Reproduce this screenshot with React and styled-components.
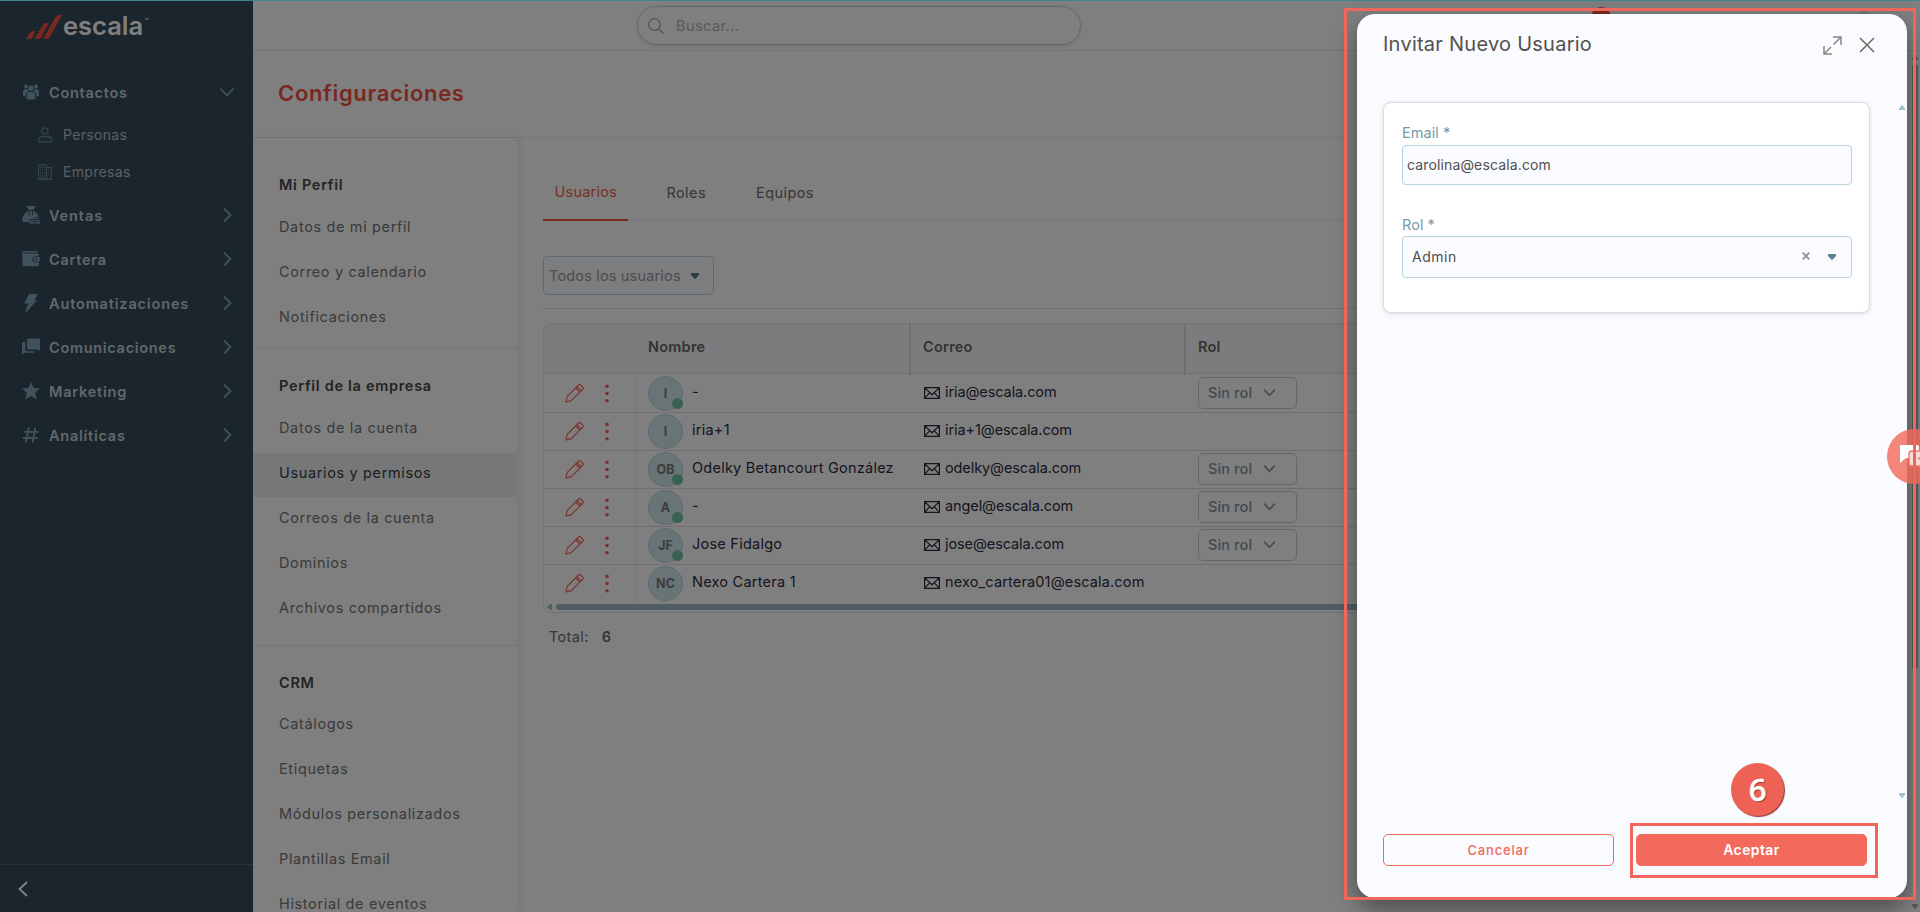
import React from "react";
import styled, { createGlobalStyle } from "styled-components";

const GlobalStyle = createGlobalStyle`
  * {
    box-sizing: border-box;
  }
  body {
    margin: 0;
    overflow: hidden;
    font-family: Inter, "Liberation Sans", sans-serif;
    font-size: 14.5px;
    color: #7a7a7a;
    background: #fff;
  }
  svg {
    display: block;
    flex-shrink: 0;
  }
`;

const Page = styled.div`
  display: flex;
  width: 1920px;
  height: 912px;
  overflow: hidden;
`;

/* sidebar */

const Sidebar = styled.aside`
  display: flex;
  flex-direction: column;
  width: 253px;
  flex-shrink: 0;
  background: #364a5a;
`;

const Brand = styled.div`
  display: flex;
  align-items: center;
  height: 50px;
  padding: 3px 0 0 26px;
  gap: 1px;
  color: #fff;
  .name {
    font-size: 25.5px;
    font-weight: 600;
    letter-spacing: 0;
    line-height: 26px;
    margin-top: -2px;
  }
  .tm {
    font-size: 7px;
    margin-top: -11px;
  }
`;

const Nav = styled.nav`
  flex: 1;
  padding-top: 20px;
`;

const NavItem = styled.div`
  display: flex;
  align-items: center;
  height: 44px;
  padding: 0 18px 0 22px;
  color: #82a6b5;
  .label {
    flex: 1;
    margin-left: 9px;
    color: #c4cfd4;
    font-size: 14.5px;
    font-weight: 600;
    letter-spacing: ${(p) => p.$spacing || 0.74}px;
  }
`;

const SubList = styled.div`
  padding: 2px 0 3px;
`;

const SubItem = styled.div`
  display: flex;
  align-items: center;
  height: 37px;
  padding-left: 37px;
  gap: 10px;
  color: #6d8d9b;
  .label {
    color: #b4c1c8;
    font-size: 14px;
    letter-spacing: 0.32px;
  }
`;

const SidebarFooter = styled.div`
  display: flex;
  align-items: center;
  height: 48px;
  padding: 0 0 0 17px;
  border-top: 1px solid #4f626f;
  color: #fff;
`;

/* main area */

const Main = styled.main`
  display: flex;
  flex-direction: column;
  flex: 1;
  min-width: 0;
`;

const TopBar = styled.header`
  height: 51px;
  flex-shrink: 0;
  padding: 6px 0 0 384px;
  border-bottom: 1px solid #e0ebec;
`;

const Search = styled.div`
  display: flex;
  align-items: center;
  width: 444px;
  height: 39px;
  padding-left: 10px;
  gap: 12px;
  border: 1px solid #c3d3dd;
  border-radius: 20px;
  box-shadow: 0 1px 4px rgba(0, 0, 0, 0.12);
  color: #a3a3a3;
  span {
    margin-top: -1px;
    font-size: 14.5px;
    letter-spacing: 0.45px;
    color: #b4b4b4;
  }
`;

const PageHeader = styled.div`
  display: flex;
  align-items: center;
  height: 87px;
  flex-shrink: 0;
  padding: 0 0 2px 25px;
  border-bottom: 1px solid #ebebeb;
  h1 {
    margin: 0;
    font-size: 22px;
    font-weight: 600;
    letter-spacing: 0.68px;
    color: #f4513f;
  }
`;

const Body = styled.div`
  display: flex;
  flex: 1;
  min-height: 0;
`;

const Settings = styled.div`
  width: 265px;
  flex-shrink: 0;
  padding-top: 10px;
  overflow: hidden;
  border-right: 1px solid #f4f4f4;
  box-shadow: 3px 0 8px rgba(0, 0, 0, 0.07);
`;

const Section = styled.section`
  padding-bottom: ${(p) => p.$bottom}px;
  border-bottom: 1px solid #eaeaea;
`;

const SectionTitle = styled.div`
  height: ${(p) => p.$height || 58}px;
  padding: 27px 0 0 26px;
  font-weight: 600;
  line-height: 20px;
  letter-spacing: 0.7px;
  color: #474747;
`;

const SectionItem = styled.div`
  height: 44px;
  margin-top: 1px;
  padding: 0 0 0 26px;
  line-height: 40px;
  white-space: nowrap;
  letter-spacing: 0.64px;
  color: ${(p) => (p.$active ? "#3a3a3a" : "#747474")};
  background: ${(p) => (p.$active ? "#ebeff3" : "transparent")};
`;

const Content = styled.div`
  flex: 1;
  min-width: 0;
  padding: 29px 20px 0 25px;
`;

const Tabs = styled.div`
  display: flex;
  gap: 26px;
  height: 53px;
  border-bottom: 1px solid #ececec;
`;

const Tab = styled.div`
  height: 54px;
  padding: ${(p) => (p.$active ? "16px 11.5px 0" : "17px 12px 0")};
  line-height: 18px;
  letter-spacing: ${(p) => (p.$active ? "0.22px" : "0.42px")};
  color: ${(p) => (p.$active ? "#f4604f" : "#6d6d6d")};
  border-bottom: 2px solid ${(p) => (p.$active ? "#f4513f" : "transparent")};
`;

const Filter = styled.div`
  display: flex;
  align-items: center;
  width: 171px;
  height: 39px;
  margin-top: 36px;
  padding: 0 14px 1px 5px;
  justify-content: space-between;
  border: 1px solid #bfd3e0;
  border-radius: 4px;
  background: #f8fafd;
  font-size: 14.5px;
  letter-spacing: 0.17px;
  color: #9c9c9c;
  svg {
    margin-top: 2px;
  }
`;

const Rule = styled.div`
  height: 1px;
  margin: 13px 0 14px;
  background: #dde6e9;
`;

const Table = styled.div`
  width: 1340px;
  height: 290px;
  border: 1px solid #dde6e9;
  border-radius: 8px;
  overflow: hidden;
`;

const Row = styled.div`
  display: grid;
  grid-template-columns: 92px 275px 275px 1fr;
  height: 38px;
  border-bottom: 1px solid ${(p) => (p.$last ? "transparent" : "#dfdfdf")};
  color: #2c2c40;
`;

const HeadRow = styled(Row)`
  height: 50px;
  margin-bottom: 1px;
  background: #f8f9fc;
  border-color: #dde6e9;
`;

const HeadCell = styled.div`
  padding: 14px 0 0 12px;
  height: 51px;
  font-size: 14.5px;
  font-weight: 600;
  letter-spacing: 0.24px;
  line-height: 18px;
  color: #666;
  border-right: ${(p) => (p.$resize ? "2px solid #dcdcdc" : "1px solid #f1f1f1")};
`;

const Actions = styled.div`
  display: flex;
  align-items: center;
  gap: 21px;
  padding-left: 21px;
  color: #f4604f;
  border-right: 1px solid #f3f3f3;
`;

const NameCell = styled.div`
  display: flex;
  padding: 1px 0 0 12px;
  gap: 9px;
  font-size: 14.5px;
  letter-spacing: 0.24px;
  line-height: 31px;
  white-space: nowrap;
`;

const Avatar = styled.div`
  position: relative;
  width: 35px;
  height: 35px;
  border: 1px solid #bcd4da;
  border-radius: 50%;
  background: #d2e9ec;
  color: #7a7a7a;
  font-size: 12.5px;
  font-weight: 700;
  line-height: 34px;
  letter-spacing: 0;
  text-align: center;
`;

const Online = styled.i`
  position: absolute;
  right: -1px;
  bottom: 1px;
  width: 11px;
  height: 11px;
  border-radius: 50%;
  background: #6cc2a8;
`;

const MailCell = styled.div`
  display: flex;
  padding-left: 13px;
  gap: 5px;
  font-size: 14.5px;
  letter-spacing: ${(p) => p.$spacing}px;
  line-height: 33px;
  svg {
    margin-top: 12px;
  }
`;

const RoleCell = styled.div`
  padding: 2px 0 0 12px;
`;

const RoleSelect = styled.div`
  display: flex;
  align-items: center;
  width: 99px;
  height: 32px;
  padding: 0 20px 1px 9px;
  justify-content: space-between;
  border: 1px solid #bfd3e0;
  border-radius: 5px;
  font-size: 14.5px;
  font-weight: 500;
  letter-spacing: 0.12px;
  color: #8297a0;
`;

const HScroll = styled.div`
  display: flex;
  align-items: center;
  gap: 4px;
  height: 6px;
  padding-left: 3px;
  margin-top: 1px;
  div {
    flex: 1;
    height: 6px;
    border-radius: 3px 0 0 3px;
    background: #a2bac9;
  }
`;

const Total = styled.div`
  display: flex;
  gap: 13px;
  padding: 15px 0 0 6px;
  line-height: 18px;
  letter-spacing: 0.35px;
  color: #6d6d6d;
  b {
    font-weight: 600;
  }
`;

/* layers over the page */

const NotificationBadge = styled.div`
  position: absolute;
  left: 1591px;
  top: 7px;
  width: 20px;
  height: 20px;
  border-radius: 50%;
  background: #f4513f;
`;

const UserBadge = styled.div`
  position: absolute;
  left: 1852px;
  top: 11px;
  width: 24px;
  height: 24px;
  border-radius: 50%;
  background: #e9eded;
`;

const PageScroll = styled.div`
  position: absolute;
  top: 55px;
  right: 2px;
  display: flex;
  flex-direction: column;
  justify-content: space-between;
  height: 854px;
  color: #a2bac9;
  div {
    width: 6px;
    height: 605px;
    margin-bottom: auto;
    margin-top: 4px;
    border-radius: 3px;
    background: #a2bac9;
  }
`;

const Backdrop = styled.div`
  position: absolute;
  inset: 0;
  background: rgba(0, 0, 0, 0.5);
`;

const LoadingLine = styled.div`
  position: absolute;
  top: 0;
  left: 0;
  width: 1920px;
  height: 1px;
  background: #3d858b;
`;

const Modal = styled.div`
  position: absolute;
  left: 1357px;
  top: 14px;
  display: flex;
  flex-direction: column;
  width: 550px;
  height: 884px;
  border-radius: 18px;
  background: #fafbfe;
  box-shadow: 0 10px 24px rgba(0, 0, 0, 0.42);
`;

const ModalHeader = styled.div`
  display: flex;
  align-items: center;
  height: 60px;
  padding: 2px 32px 0 26px;
  color: #6a6a6a;
  h2 {
    flex: 1;
    margin: -2px 0 0;
    font-size: 20px;
    font-weight: 400;
    letter-spacing: 0.25px;
    color: #55504f;
  }
  svg + svg {
    margin-left: 17px;
  }
`;

const ModalBody = styled.div`
  display: flex;
  justify-content: space-between;
  flex: 1;
  padding: 28px 2px 36px 26px;
`;

const Card = styled.div`
  width: 487px;
  height: 211px;
  padding: 20px 17px 20px 18px;
  border: 1px solid #dcdcdc;
  border-radius: 8px;
  background: #fff;
  box-shadow: 0 1px 4px rgba(0, 0, 0, 0.12);
`;

const Label = styled.label`
  display: block;
  height: 22px;
  line-height: ${(p) => p.$line || 20}px;
  font-size: 14.5px;
  letter-spacing: 0.05px;
  color: #7799aa;
`;

const Field = styled.div`
  display: flex;
  align-items: center;
  height: ${(p) => p.$height}px;
  padding: 0 15px 2px ${(p) => p.$left}px;
  margin-bottom: 29px;
  border: 1px solid #b9d3de;
  border-radius: 4px;
  background: #fafbfe;
  color: #4f4f4f;
  font-size: 14px;
  letter-spacing: ${(p) => p.$spacing}px;
  span {
    flex: 1;
  }
  svg + svg {
    margin: 2px 0 0 18px;
  }
`;

const BodyScroll = styled.div`
  display: flex;
  flex-direction: column;
  justify-content: space-between;
  padding: 3px 0 0;
  color: #a3c0cf;
`;

const ModalFooter = styled.div`
  display: flex;
  gap: 22px;
  height: 64px;
  padding: 0 0 0 26px;
`;

const Button = styled.button`
  width: 231px;
  height: 32px;
  padding: 0 0 1px;
  border: 1px solid #f26a5c;
  border-radius: 5px;
  font-family: inherit;
  font-size: ${(p) => (p.$primary ? "14px" : "13px")};
  font-weight: ${(p) => (p.$primary ? 600 : 500)};
  letter-spacing: ${(p) => (p.$primary ? "0.4px" : "0.8px")};
  color: ${(p) => (p.$primary ? "#fff" : "#f26a5c")};
  background: ${(p) => (p.$primary ? "#f26a5c" : "transparent")};
`;

const ChatBubble = styled.div`
  position: absolute;
  left: 1887px;
  top: 429px;
  width: 55px;
  height: 55px;
  padding: 15px 0 0 12px;
  border-radius: 50%;
  background: rgba(242, 106, 92, 0.82);
`;

const Highlight = styled.div`
  position: absolute;
  left: ${(p) => p.$x}px;
  top: ${(p) => p.$y}px;
  width: ${(p) => p.$w}px;
  height: ${(p) => p.$h}px;
  border: 3px solid #f0665a;
`;

const Step = styled.div`
  position: absolute;
  left: 1731px;
  top: 763px;
  width: 53px;
  height: 53px;
  border-radius: 50%;
  background: #ee6256;
  box-shadow: 1px 1px 1px #8d3a33;
  color: #fff;
  font-family: "Noto Sans", sans-serif;
  font-size: 31px;
  font-weight: 500;
  line-height: 52px;
  text-align: center;
  text-shadow: 1px 1px 1px #7a3029;
  -webkit-text-stroke: 0.6px #fff;
`;

/* icons */

const Chevron = ({ dir, w = 1.8, size = 16 }) => {
  const d = {
    right: "M5 1.5 11.5 8 5 14.5",
    left: "M10 1 2.5 8 10 15",
    down: "M1.5 4.5 8 11.5 14.5 4.5",
  }[dir];
  return (
    <svg width={size} height={size} viewBox="0 0 16 16" fill="none" stroke="currentColor" strokeWidth={w}>
      <path d={d} />
    </svg>
  );
};

const Caret = ({ color = "#5e7f90" }) => (
  <svg width="8" height="6" viewBox="0 0 8 6" fill={color}>
    <path d="M.7 0h6.6q.7 0 .7 1v1L4.8 5.500q-.8.8-1.600 0L0 2V1q0-1 .7-1z" />
  </svg>
);

const Triangle = ({ d }) => (
  <svg width="6" height="5" viewBox="0 0 6 5" fill="currentColor">
    <path d={d} />
  </svg>
);

const UP = "M0 5V3.6L2.3.5q.7-.8 1.4 0L6 3.6V5z";
const DOWN = "M0 0v1.4l2.3 3.1q.7.8 1.4 0L6 1.4V0z";

const navIcons = {
  people: (
    <>
      <circle cx="9" cy="5.3" r="2.7" />
      <circle cx="4" cy="3.5" r="2" />
      <circle cx="14" cy="3.5" r="2" />
      <path d="M4.6 16V12.4Q4.6 9 8 9h2q3.4 0 3.4 3.4V16q-4.4 1.6-8.8 0z" />
      <path d="M1 13V9.2Q1 6.3 3.6 6.3h1.6Q5.8 7.6 6.9 8.2 4 8.8 3.6 11.8V13.6zM17 13V9.2q0-2.9-2.6-2.9h-1.6q-.6 1.3-1.7 1.9 2.9.6 3.3 3.6v1.8z" />
    </>
  ),
  money: (
    <>
      <path d="M4.5 0h9v1.6h-1.4L11.6 4H6.4L5.9 1.6H4.5z" />
      <path d="M6 4.8h6Q16 7.6 16.6 11h-4.2v2H7.4v3H1.6Q0 16 0 13.6 1 8 6 4.8z" />
      <path d="M12.4 11.8H17v1.3h-4.6zM7.6 14H13v1.3H7.6zM13.6 14H18v1.3h-4.4zM7 16.1h5.6v1.5H7zM13.2 16.1H18v1.5h-4.8z" />
      <path d="M7.6 4 6.8 10M10.4 4v5" stroke="#364a5a" strokeWidth="1" fill="none" />
    </>
  ),
  wallet: (
    <>
      <path d="M2 1h13.4v1.5H2.4v.9H16q.8 0 .8.8v2H13q-2.6 0-2.6 3t2.6 3h3.8V15q0 1.2-1.2 1.2H2Q.4 16.2.4 14.6V2.6Q.4 1 2 1z" />
      <path d="M13 7h4.8v4.4H13q-1.7 0-1.7-2.2T13 7zm.6 1.3v1.6h1.6V8.3z" fillRule="evenodd" />
    </>
  ),
  bolt: <path d="M7 0h9l-3.600 6H15L4.600 18l-1.200-.600L6.500 9.600H2z" />,
  chat: (
    <>
      <path d="M6.6.6h9.8q1.6 0 1.6 1.6V13l-2.6-1.6H6.6Q5 11.4 5 9.8V2.2Q5 .6 6.6.6z" />
      <path d="M1.6 4H3.4v7.6q0 1.7 1.7 1.7h7.3v.6q0 .9-.9.9H2.6L0 16.8V5.4Q0 4 1.6 4z" />
    </>
  ),
  star: <path d="M9 0l2.7 6 6.3.6-4.8 4.2 1.5 6.6L9 14l-5.7 3.4 1.5-6.6L0 6.6 6.3 6z" />,
  hash: <path d="M6.8 1.5 4 16.5M13.4 1.5 10.6 16.5M2.2 5.8H16.6M1 12H15.5" fill="none" stroke="currentColor" strokeWidth="1.8" />,
};

const NavIcon = ({ name }) => (
  <svg width="18" height="18" viewBox="0 0 18 18" fill="currentColor">
    {navIcons[name]}
  </svg>
);

const PersonIcon = () => (
  <svg width="16" height="16" viewBox="0 0 16 16" fill="none" stroke="currentColor" strokeWidth="1.2">
    <circle cx="8" cy="4" r="3.2" />
    <path d="M1.6 14.8V13q0-3.6 3.8-3.6 2.6 1.2 5.2 0 3.8 0 3.8 3.6v1.8z" />
  </svg>
);

const BuildingIcon = () => (
  <svg width="16" height="16" viewBox="0 0 16 16" fill="none" stroke="currentColor" strokeWidth="1.1">
    <path d="M1.5 15.4V1h8v14.4M9.5 3.5h5v11.9M.8 15.4h14.4" />
    <path d="M3 3.5h5M3 6h5M3 8.5h5M3 11h5M11 6h2.4M11 8.5h2.4M11 11h2.4" strokeDasharray="1.2 .8" />
    <path d="M4 15v-2h3v2" />
  </svg>
);

const PencilIcon = () => (
  <svg width="19" height="19" viewBox="0 0 19 19" fill="none" stroke="currentColor" strokeWidth="1.1" strokeLinejoin="round">
    <path d="M1 18l1.2-5.6L12.600 2l1.200-1.200q.8-.5 1.500 0l2.700 2.700q.5.800 0 1.500l-1.400 1.300L6.400 16.600z" />
    <path d="M12 2.600l4.400 4.400M10.600 4l4.400 4.400" />
  </svg>
);

const DotsIcon = () => (
  <svg width="4" height="19" viewBox="0 0 4 19" fill="currentColor">
    <circle cx="2" cy="2.2" r="1.8" />
    <circle cx="2" cy="9.5" r="1.8" />
    <circle cx="2" cy="16.8" r="1.8" />
  </svg>
);

const MailIcon = () => (
  <svg width="16" height="12" viewBox="0 0 16 12" fill="none" stroke="currentColor" strokeWidth="1.2">
    <path d="M.6.6h14.8v10.800H.6zM.6.600 8 7.800 15.400.6M.6 11.400 5.700 5.600M15.400 11.400l-5.100-5.800" />
  </svg>
);

/* data */

const navItems = [
  { icon: "money", label: "Ventas", spacing: 0.9 },
  { icon: "wallet", label: "Cartera", spacing: 0.75 },
  { icon: "bolt", label: "Automatizaciones", spacing: 0.85 },
  { icon: "chat", label: "Comunicaciones", spacing: 0.7 },
  { icon: "star", label: "Marketing", spacing: 0.78 },
  { icon: "hash", label: "Analíticas", spacing: 0.75 },
];

const sections = [
  {
    title: "Mi Perfil",
    bottom: 7,
    items: ["Datos de mi perfil", "Correo y calendario", "Notificaciones"],
  },
  {
    title: "Perfil de la empresa",
    bottom: 13,
    items: ["Datos de la cuenta", "Usuarios y permisos", "Correos de la cuenta", "Dominios", "Archivos compartidos"],
  },
  {
    title: "CRM",
    bottom: 0,
    height: 57,
    items: ["Catálogos", "Etiquetas", "Módulos personalizados", "Plantillas Email", "Historial de eventos"],
  },
];

const users = [
  { initials: "I", name: "-", mail: "iria@escala.com", online: true },
  { initials: "I", name: "iria+1", mail: "iria+1@escala.com" },
  { initials: "OB", name: "Odelky Betancourt González", mail: "odelky@escala.com", online: true },
  { initials: "A", name: "-", mail: "angel@escala.com", online: true },
  { initials: "JF", name: "Jose Fidalgo", mail: "jose@escala.com", online: true },
  { initials: "NC", name: "Nexo Cartera 1", mail: "nexo_cartera01@escala.com" },
];

export default function App() {
  return (
    <Page>
      <GlobalStyle />
      <Sidebar>
        <Brand>
          <svg width="36" height="24" viewBox="0 0 36 24" fill="#f4513f">
            <path d="M0 24 4 17.5Q5.2 16 7 16H9.5L6.600 22.500Q5.600 24 4 24zM8.600 24 17 9.600Q18.200 8 20 8H23L15.200 22.400Q14.200 24 12.600 24zM17 24 29.800 1.600Q31 0 32.800 0H36L23.600 22.400Q22.600 24 21 24z" />
          </svg>
          <span className="name">escala</span>
          <span className="tm">™</span>
        </Brand>
        <Nav>
          <NavItem>
            <NavIcon name="people" />
            <span className="label">Contactos</span>
            <Chevron dir="down" />
          </NavItem>
          <SubList>
            <SubItem>
              <PersonIcon />
              <span className="label">Personas</span>
            </SubItem>
            <SubItem>
              <BuildingIcon />
              <span className="label">Empresas</span>
            </SubItem>
          </SubList>
          {navItems.map((item) => (
            <NavItem key={item.label} $spacing={item.spacing}>
              <NavIcon name={item.icon} />
              <span className="label">{item.label}</span>
              <Chevron dir="right" />
            </NavItem>
          ))}
        </Nav>
        <SidebarFooter>
          <Chevron dir="left" w={2} />
        </SidebarFooter>
      </Sidebar>

      <Main>
        <TopBar>
          <Search>
            <svg width="16" height="16" viewBox="0 0 16 16" fill="none" stroke="currentColor" strokeWidth="1.2">
              <circle cx="6.5" cy="6.5" r="5.8" />
              <path d="M11 11.5l4.5 4" />
            </svg>
            <span>Buscar...</span>
          </Search>
        </TopBar>
        <PageHeader>
          <h1>Configuraciones</h1>
        </PageHeader>
        <Body>
          <Settings>
            {sections.map((section) => (
              <Section key={section.title} $bottom={section.bottom}>
                <SectionTitle $height={section.height}>{section.title}</SectionTitle>
                {section.items.map((item) => (
                  <SectionItem key={item} $active={item === "Usuarios y permisos"}>
                    {item}
                  </SectionItem>
                ))}
              </Section>
            ))}
          </Settings>
          <Content>
            <Tabs>
              <Tab $active>Usuarios</Tab>
              <Tab>Roles</Tab>
              <Tab>Equipos</Tab>
            </Tabs>
            <Filter>
              Todos los usuarios
              <Caret color="#5b7789" />
            </Filter>
            <Rule />
            <Table>
              <HeadRow>
                <HeadCell />
                <HeadCell $resize>Nombre</HeadCell>
                <HeadCell $resize>Correo</HeadCell>
                <HeadCell>Rol</HeadCell>
              </HeadRow>
              {users.map((user, i) => (
                <Row key={user.mail} $last={i === users.length - 1}>
                  <Actions>
                    <PencilIcon />
                    <DotsIcon />
                  </Actions>
                  <NameCell>
                    <Avatar>
                      {user.initials}
                      {user.online && <Online />}
                    </Avatar>
                    {user.name}
                  </NameCell>
                  <MailCell $spacing={user.mail.length > 20 ? 0.15 : -0.1}>
                    <MailIcon />
                    {user.mail}
                  </MailCell>
                  <RoleCell>
                    {user.online && (
                      <RoleSelect>
                        Sin rol
                        <Chevron dir="down" size={13} w={2} />
                      </RoleSelect>
                    )}
                  </RoleCell>
                </Row>
              ))}
              <HScroll>
                <svg width="5" height="6" viewBox="0 0 5 6" fill="#a2bac9">
                  <path d="M5 0v6H4L.5 3.7q-.7-.7 0-1.4L4 0z" />
                </svg>
                <div />
              </HScroll>
            </Table>
            <Total>
              Total: <b>6</b>
            </Total>
          </Content>
        </Body>
      </Main>

      <NotificationBadge />
      <UserBadge />
      <PageScroll>
        <Triangle d={UP} />
        <div />
        <Triangle d={DOWN} />
      </PageScroll>
      <Backdrop />
      <LoadingLine />

      <Modal>
        <ModalHeader>
          <h2>Invitar Nuevo Usuario</h2>
          <svg width="19" height="19" viewBox="0 0 19 19" fill="none" stroke="#8a8584" strokeWidth="1.5">
            <path d="M10 1h8v8M1 10v8h8M18 1l-7.500 7.500M1 18l7-7" />
          </svg>
          <svg width="16" height="16" viewBox="0 0 16 16" fill="none" stroke="#6b6665" strokeWidth="1.5">
            <path d="M1 1l14 14M15 1 1 15" />
          </svg>
        </ModalHeader>
        <ModalBody>
          <Card>
            <Label>Email *</Label>
            <Field $height={40} $left={4} $spacing={0.14}>
              <span>carolina@escala.com</span>
            </Field>
            <Label $line={22}>Rol *</Label>
            <Field $height={42} $left={9} $spacing={0.5}>
              <span>Admin</span>
              <svg width="8" height="8" viewBox="0 0 8 8" fill="none" stroke="#929292" strokeWidth="1.8">
                <path d="M.7.7l6.6 6.6M7.3.7.7 7.3" />
              </svg>
              <Caret />
            </Field>
          </Card>
          <BodyScroll>
            <Triangle d={UP} />
            <Triangle d={DOWN} />
          </BodyScroll>
        </ModalBody>
        <ModalFooter>
          <Button>Cancelar</Button>
          <Button $primary>Aceptar</Button>
        </ModalFooter>
      </Modal>

      <ChatBubble>
        <svg width="34" height="24" viewBox="0 0 34 24">
          <path d="M2 1h16q2 0 2 2v11H7l-6 5V2q0-1 1-1z" fill="#fff" />
          <path d="M13 7h22v15H13q-3 0-3-3V10q0-3 3-3z" fill="#f4dcd9" stroke="#ef7b70" strokeWidth="1.5" />
          <path d="M19 14.500h3" stroke="#ef7b70" strokeWidth="2" />
        </svg>
      </ChatBubble>
      <Highlight $x={1344} $y={8} $w={572} $h={892} />
      <Highlight $x={1630} $y={823} $w={248} $h={55} />
      <Step>6</Step>
    </Page>
  );
}
